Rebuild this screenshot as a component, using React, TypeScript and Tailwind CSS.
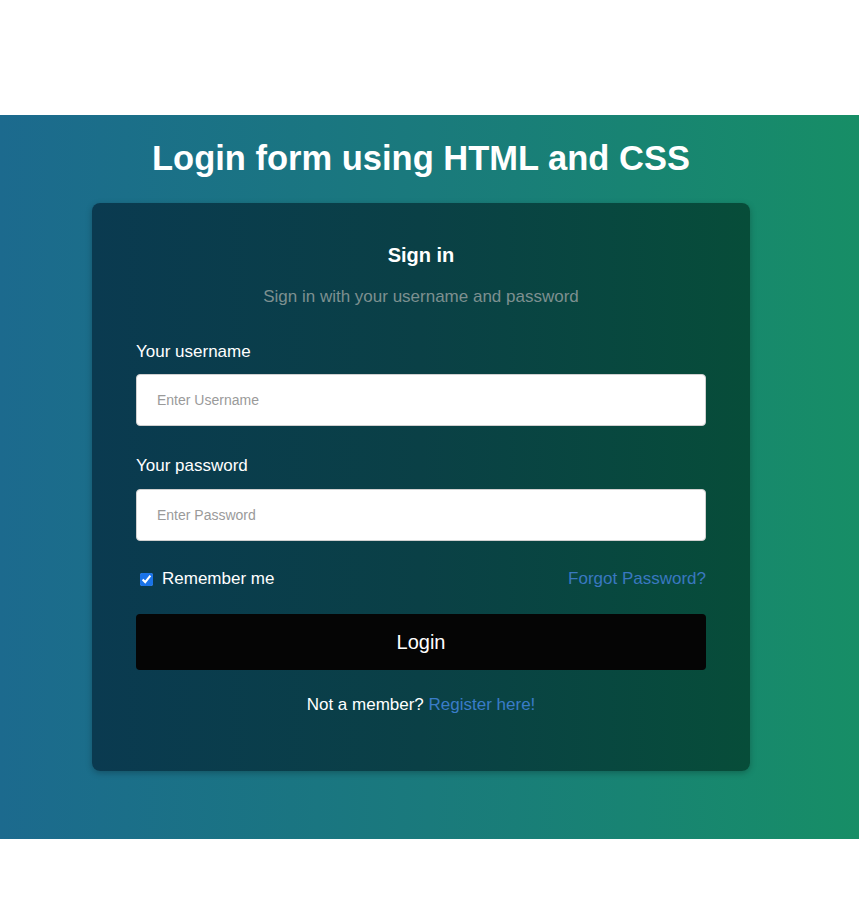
import React from "react";

export default function App() {
  const font = { fontFamily: '"Liberation Sans", Arial, sans-serif' };
  return (
    <div className="w-[859px] min-h-[923px] bg-white" style={font}>
      <div className="h-[115px] bg-white" />
      <section className="h-[724px] pr-[17px] flex flex-col items-center bg-gradient-to-r from-[#1c6a8e] via-[#1a7a7c] to-[#178e66]">
        <h1 className="mt-[23px] h-[40px] leading-[40px] text-[34.5px] font-bold text-white">
          Login form using HTML and CSS
        </h1>
        <div className="mt-[25px] w-[658px] h-[568px] rounded-[8px] px-[44px] flex flex-col bg-gradient-to-r from-[#0a3a50] via-[#0a4046] to-[#074d39] shadow-[0_2px_6px_rgba(0,0,0,0.25)]">
          <div className="mt-[40px] h-[24px] leading-[24px] text-center text-[20px] font-bold text-white">
            Sign in
          </div>
          <div className="mt-[20px] h-[20px] leading-[20px] text-center text-[17px] text-[#7d9090]">
            Sign in with your username and password
          </div>
          <label className="mt-[35px] h-[20px] leading-[20px] text-[17px] text-white">
            Your username
          </label>
          <input
            type="text"
            placeholder="Enter Username"
            className="mt-[12px] h-[52px] w-full rounded-[4px] bg-white border border-[#d0d0d0] px-[20px] text-[14px] text-black placeholder:text-[#9a9a9a] outline-none"
            style={font}
          />
          <label className="mt-[30px] h-[20px] leading-[20px] text-[17px] text-white">
            Your password
          </label>
          <input
            type="password"
            placeholder="Enter Password"
            className="mt-[13px] h-[52px] w-full rounded-[4px] bg-white border border-[#d0d0d0] px-[20px] text-[14px] text-black placeholder:text-[#9a9a9a] outline-none"
            style={font}
          />
          <div className="mt-[28px] h-[20px] flex items-center justify-between">
            <label className="flex items-center text-[17px] text-white leading-[20px]">
              <input
                type="checkbox"
                defaultChecked
                className="ml-[4px] mr-[9px] w-[13px] h-[13px] accent-[#1a73e8]"
              />
              Remember me
            </label>
            <a className="text-[17px] leading-[20px] text-[#3a78c0]">Forgot Password?</a>
          </div>
          <button
            className="mt-[25px] h-[56px] w-full rounded-[4px] bg-[#050505] text-white text-[20px]"
            style={font}
          >
            Login
          </button>
          <div className="mt-[25px] h-[20px] leading-[20px] text-center text-[17px] text-white">
            Not a member? <a className="text-[#3a7cc8]">Register here!</a>
          </div>
        </div>
      </section>
      <div className="h-[84px] bg-white" />
    </div>
  );
}
